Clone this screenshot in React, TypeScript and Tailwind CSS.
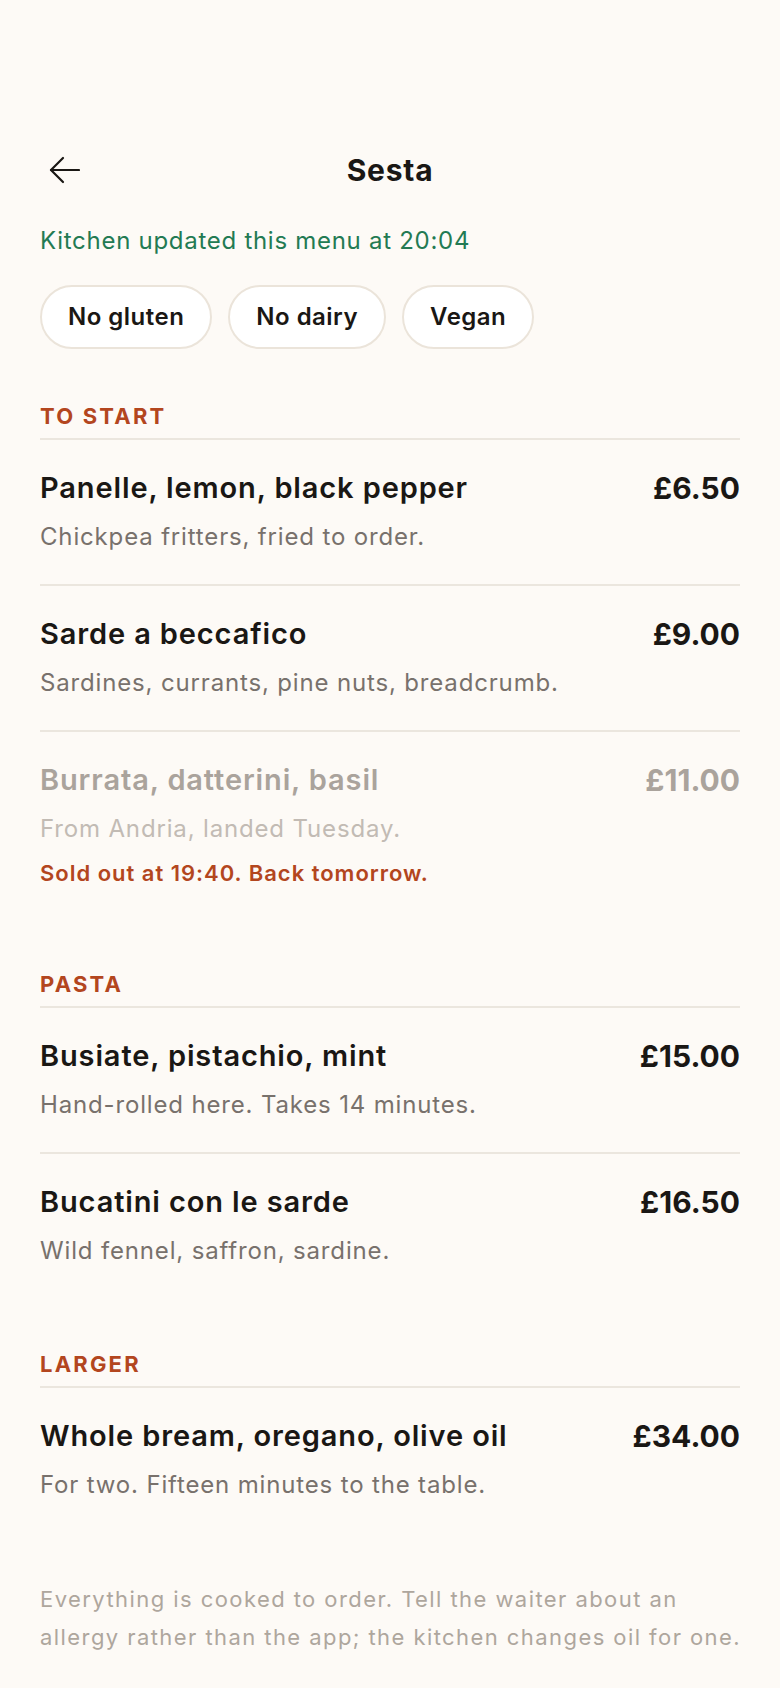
import { useState } from "react";

type Dish = {
  name: string;
  note: string;
  price: string;
  soldOut?: string;
};

const SECTIONS: { title: string; dishes: Dish[] }[] = [
  {
    title: "To start",
    dishes: [
      { name: "Panelle, lemon, black pepper", note: "Chickpea fritters, fried to order.", price: "£6.50" },
      { name: "Sarde a beccafico", note: "Sardines, currants, pine nuts, breadcrumb.", price: "£9.00" },
      {
        name: "Burrata, datterini, basil",
        note: "From Andria, landed Tuesday.",
        price: "£11.00",
        soldOut: "Sold out at 19:40. Back tomorrow.",
      },
    ],
  },
  {
    title: "Pasta",
    dishes: [
      { name: "Busiate, pistachio, mint", note: "Hand-rolled here. Takes 14 minutes.", price: "£15.00" },
      { name: "Bucatini con le sarde", note: "Wild fennel, saffron, sardine.", price: "£16.50" },
    ],
  },
  {
    title: "Larger",
    dishes: [
      { name: "Whole bream, oregano, olive oil", note: "For two. Fifteen minutes to the table.", price: "£34.00" },
    ],
  },
];

const FILTERS = ["No gluten", "No dairy", "Vegan"];

function DishRow({ dish, last }: { dish: Dish; last: boolean }) {
  const out = !!dish.soldOut;
  return (
    <div
      className={`flex items-start justify-between gap-6 pt-[30px] pb-[30px] ${
        last ? "" : "border-b-2 border-[#ebe6de]"
      }`}
    >
      <div className="min-w-0">
        <p
          className={`text-[29px] leading-[36px] font-semibold tracking-[0.03em] ${
            out ? "text-[#aaa39c]" : "text-[#1a1714]"
          }`}
        >
          {dish.name}
        </p>
        <p
          className={`mt-[14px] text-[24px] leading-[34px] tracking-[0.035em] ${
            out ? "text-[#c2bbb4]" : "text-[#78716c]"
          }`}
        >
          {dish.note}
        </p>
        {dish.soldOut && (
          <p className="mt-3 text-[22px] leading-[30px] font-semibold tracking-[0.045em] text-[#b3461e]">
            {dish.soldOut}
          </p>
        )}
      </div>
      <p
        className={`shrink-0 text-[30px] leading-[36px] font-bold ${
          out ? "text-[#aaa39c]" : "text-[#1a1714]"
        }`}
      >
        {dish.price}
      </p>
    </div>
  );
}

export default function App() {
  const [active, setActive] = useState<string[]>([]);

  const toggle = (f: string) =>
    setActive((prev) => (prev.includes(f) ? prev.filter((x) => x !== f) : [...prev, f]));

  return (
    <div
      className="min-h-screen bg-[#fdfaf6] px-10 pt-[146px] pb-[31px]"
      style={{ fontFamily: "Inter, 'Noto Sans', sans-serif" }}
    >
      {/* Header */}
      <div className="flex items-center justify-between h-12">
        <button className="w-12 h-12 flex items-center justify-center text-[#1a1714]">
          <svg width="32" height="28" viewBox="0 0 32 28" fill="none" stroke="currentColor" strokeWidth="2.2" strokeLinecap="round" strokeLinejoin="round">
            <path d="M31 14H3" />
            <path d="M15 2L3 14l12 12" />
          </svg>
        </button>
        <h1 className="text-[30px] leading-[36px] font-bold tracking-[0.025em] text-[#1a1714]">Sesta</h1>
        <div className="w-12 h-12" />
      </div>

      <p className="mt-[30px] text-[24px] leading-[34px] tracking-[0.03em] text-[#237a53]">
        Kitchen updated this menu at 20:04
      </p>

      {/* Filters */}
      <div className="mt-[27px] flex gap-4">
        {FILTERS.map((f) => (
          <button
            key={f}
            onClick={() => toggle(f)}
            className={`h-16 px-[26px] rounded-full border-2 text-[24px] leading-[32px] font-semibold tracking-[0.02em] ${
              active.includes(f)
                ? "bg-[#1a1714] border-[#1a1714] text-white"
                : "bg-white border-[#ebe4da] text-[#1a1714]"
            }`}
          >
            {f}
          </button>
        ))}
      </div>

      {/* Menu */}
      <div className="mt-[53px] flex flex-col gap-[52px]">
        {SECTIONS.map((s) => (
          <section key={s.title}>
            <h2 className="pb-[8px] border-b-2 border-[#ebe6de] text-[22px] leading-[28px] font-bold uppercase tracking-[0.1em] text-[#b3461e]">
              {s.title}
            </h2>
            {s.dishes.map((d, i) => (
              <DishRow key={d.name} dish={d} last={i === s.dishes.length - 1} />
            ))}
          </section>
        ))}
      </div>

      <p className="mt-[48px] text-[22px] leading-[38px] tracking-[0.065em] text-[#aea69d]">
        <span className="block whitespace-nowrap">Everything is cooked to order. Tell the waiter about an</span>
        <span className="block whitespace-nowrap">allergy rather than the app; the kitchen changes oil for one.</span>
      </p>
    </div>
  );
}
